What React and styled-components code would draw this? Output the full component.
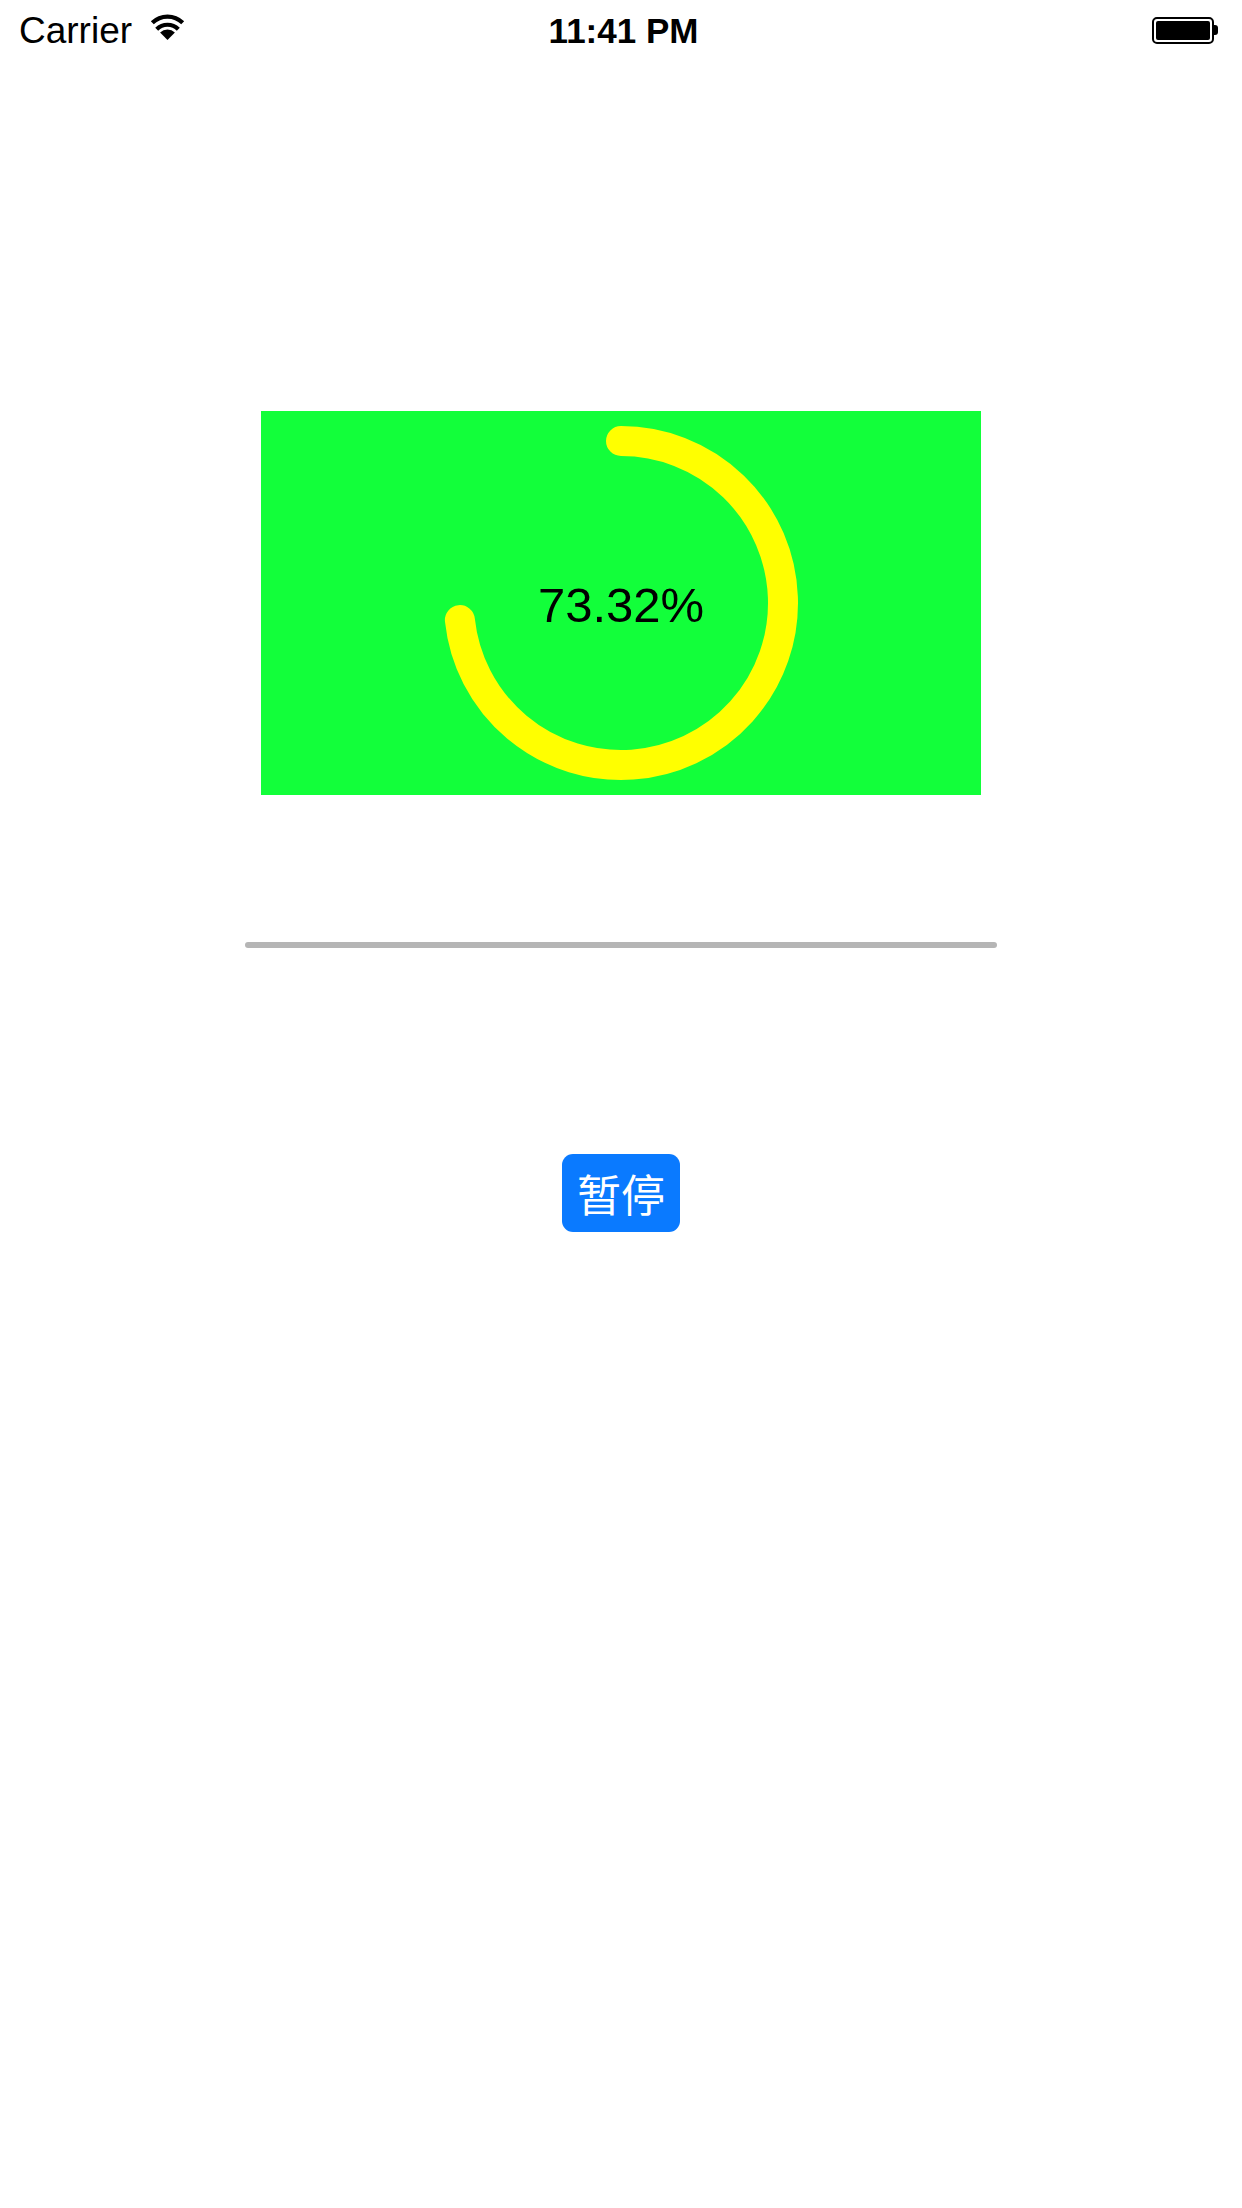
import React from "react"
import styled, { createGlobalStyle } from "styled-components"

const progress = 0.7332

const GlobalStyle = createGlobalStyle`
    html, body {
        margin: 0;
        padding: 0;
        background: #fff;
    }

    body {
        font-family: "Liberation Sans", Arial, "Noto Sans CJK SC", sans-serif;
    }
`

const arcPath = (cx, cy, r, p) => {
    const a = p * Math.PI * 2
    const x = cx + r * Math.sin(a)
    const y = cy - r * Math.cos(a)
    const large = p > 0.5 ? 1 : 0
    return `M ${cx} ${cy - r} A ${r} ${r} 0 ${large} 1 ${x.toFixed(2)} ${y.toFixed(2)}`
}

const Wifi = () => (
    <svg width="37" height="28" viewBox="0 0 36 28">
        <path d="M18 27 L10.6 19.6 A10.5 10.5 0 0 1 25.4 19.6 Z" fill="#000" />
        <path d="M7.2 16.2 A15.3 15.3 0 0 1 28.8 16.2" fill="none" stroke="#000" strokeWidth="4.2" />
        <path d="M2.8 9.8 A21.7 21.7 0 0 1 33.2 9.8" fill="none" stroke="#000" strokeWidth="4.2" />
    </svg>
)

const App = () => {

    return (

        <Page>

            <GlobalStyle />

            <StatusBar>

                <Left>
                    <Carrier>Carrier</Carrier>
                    <Wifi />
                </Left>

                <Time>11:41 PM</Time>

                <Right>
                    <Battery>
                        <BatteryFill />
                    </Battery>
                    <BatteryNub />
                </Right>

            </StatusBar>

            <Content>

                <GreenBox>

                    <Ring width="720" height="384" viewBox="0 0 720 384">
                        <path
                            d={arcPath(360, 192, 162, progress)}
                            fill="none"
                            stroke="#ffff00"
                            strokeWidth="30"
                            strokeLinecap="round"
                        />
                    </Ring>

                    <Percent>{(progress * 100).toFixed(2)}%</Percent>

                </GreenBox>

                <Track />

                <PauseButton>暂停</PauseButton>

            </Content>

        </Page>

    )

}

const Page = styled.div`
    width: 1242px;
    min-height: 2208px;
    background: #fff;
`

const StatusBar = styled.div`
    height: 60px;
    display: grid;
    grid-template-columns: 1fr auto 1fr;
    align-items: center;
    padding: 0 14px 0 19px;
    box-sizing: border-box;
    color: #000;
`

const Left = styled.div`
    display: flex;
    align-items: center;
    gap: 17px;

    svg {
        margin-top: -6px;
    }
`

const Carrier = styled.span`
    font-size: 37px;
    line-height: 1;
`

const Time = styled.span`
    font-size: 35px;
    font-weight: 700;
    line-height: 1;
`

const Right = styled.div`
    display: flex;
    align-items: center;
    justify-content: flex-end;
    padding-right: 10px;
`

const Battery = styled.div`
    width: 62px;
    height: 27px;
    box-sizing: border-box;
    border: 2px solid #000;
    border-radius: 5px;
    padding: 2px;
    display: flex;
`

const BatteryFill = styled.div`
    flex: 1;
    background: #000;
    border-radius: 2px;
`

const BatteryNub = styled.div`
    width: 4px;
    height: 10px;
    background: #000;
    border-radius: 0 3px 3px 0;
`

const Content = styled.div`
    display: flex;
    flex-direction: column;
    align-items: center;
    padding-top: 351px;
`

const GreenBox = styled.div`
    width: 720px;
    height: 384px;
    background: #12ff3a;
    display: grid;
    place-items: center;

    & > * {
        grid-area: 1 / 1;
    }
`

const Ring = styled.svg`
    display: block;
`

const Percent = styled.span`
    font-size: 49px;
    color: #000;
    line-height: 1;
    margin-top: 4px;
`

const Track = styled.div`
    width: 752px;
    height: 6px;
    border-radius: 3px;
    background: #b5b5b5;
    margin-top: 147px;
`

const PauseButton = styled.button`
    margin-top: 206px;
    width: 118px;
    height: 78px;
    border: none;
    border-radius: 11px;
    background: #0a7aff;
    color: #fff;
    font-family: "Noto Sans CJK SC", sans-serif;
    font-size: 44px;
    line-height: 1;
    padding: 0;
    display: flex;
    align-items: center;
    justify-content: center;
`

export default App
